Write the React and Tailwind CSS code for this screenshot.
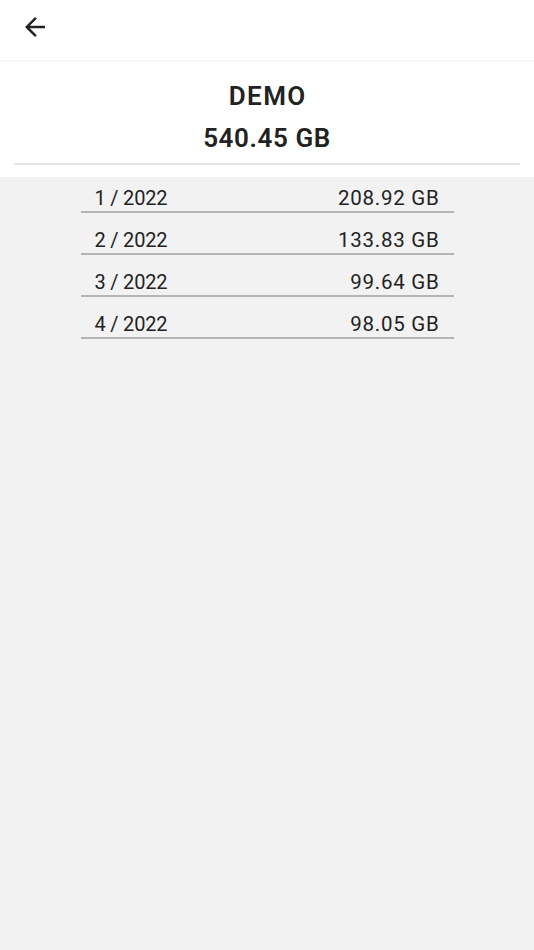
import React from 'react'

const months = [
  { label: '1 / 2022', value: '208.92 GB' },
  { label: '2 / 2022', value: '133.83 GB' },
  { label: '3 / 2022', value: '99.64 GB' },
  { label: '4 / 2022', value: '98.05 GB' },
]

export default function App() {
  return (
    <div className="min-h-screen flex flex-col bg-[#f2f2f2] text-[#222222]" style={{ fontFamily: 'Roboto, "Noto Sans", sans-serif' }}>
      {/* Top bar */}
      <div className="h-[60px] bg-white flex items-start pt-[12px] pl-[20px]">
        <button className="w-[30px] h-[30px] flex items-center justify-center">
          <svg viewBox="0 0 24 24" className="w-[30px] h-[30px]" fill="#222222">
            <path d="M20 11H7.83l5.59-5.59L12 4l-8 8 8 8 1.41-1.41L7.83 13H20v-2z" />
          </svg>
        </button>
      </div>
      <div className="h-[2px] bg-[#f8f8f8]" />

      {/* Summary */}
      <div className="bg-white pt-[19px] pb-[12px]">
        <div className="text-center text-[26px] leading-[30px] font-semibold tracking-[1.4px] pl-[1.4px]">DEMO</div>
        <div className="text-center text-[26px] leading-[32px] font-semibold tracking-[0.6px] mt-[11px]">540.45 GB</div>
        <div className="mx-[14px] mt-[9px] h-[2px] bg-[#e6e6e6]" />
      </div>

      {/* Monthly usage */}
      <div className="flex-1 flex flex-col items-center pt-[7px]">
        <div className="w-[373px] flex flex-col gap-[13px]">
          {months.map((m) => (
            <div key={m.label} className="h-[29px] flex justify-between items-start pt-[2px] px-[14px] border-b-2 border-[#b5b5b5]">
              <span className="block text-[20px] leading-[24px] tracking-[-0.2px]">{m.label}</span>
              <span className="block text-[20.5px] leading-[24px] tracking-[0.75px]">{m.value}</span>
            </div>
          ))}
        </div>
      </div>
    </div>
  )
}
